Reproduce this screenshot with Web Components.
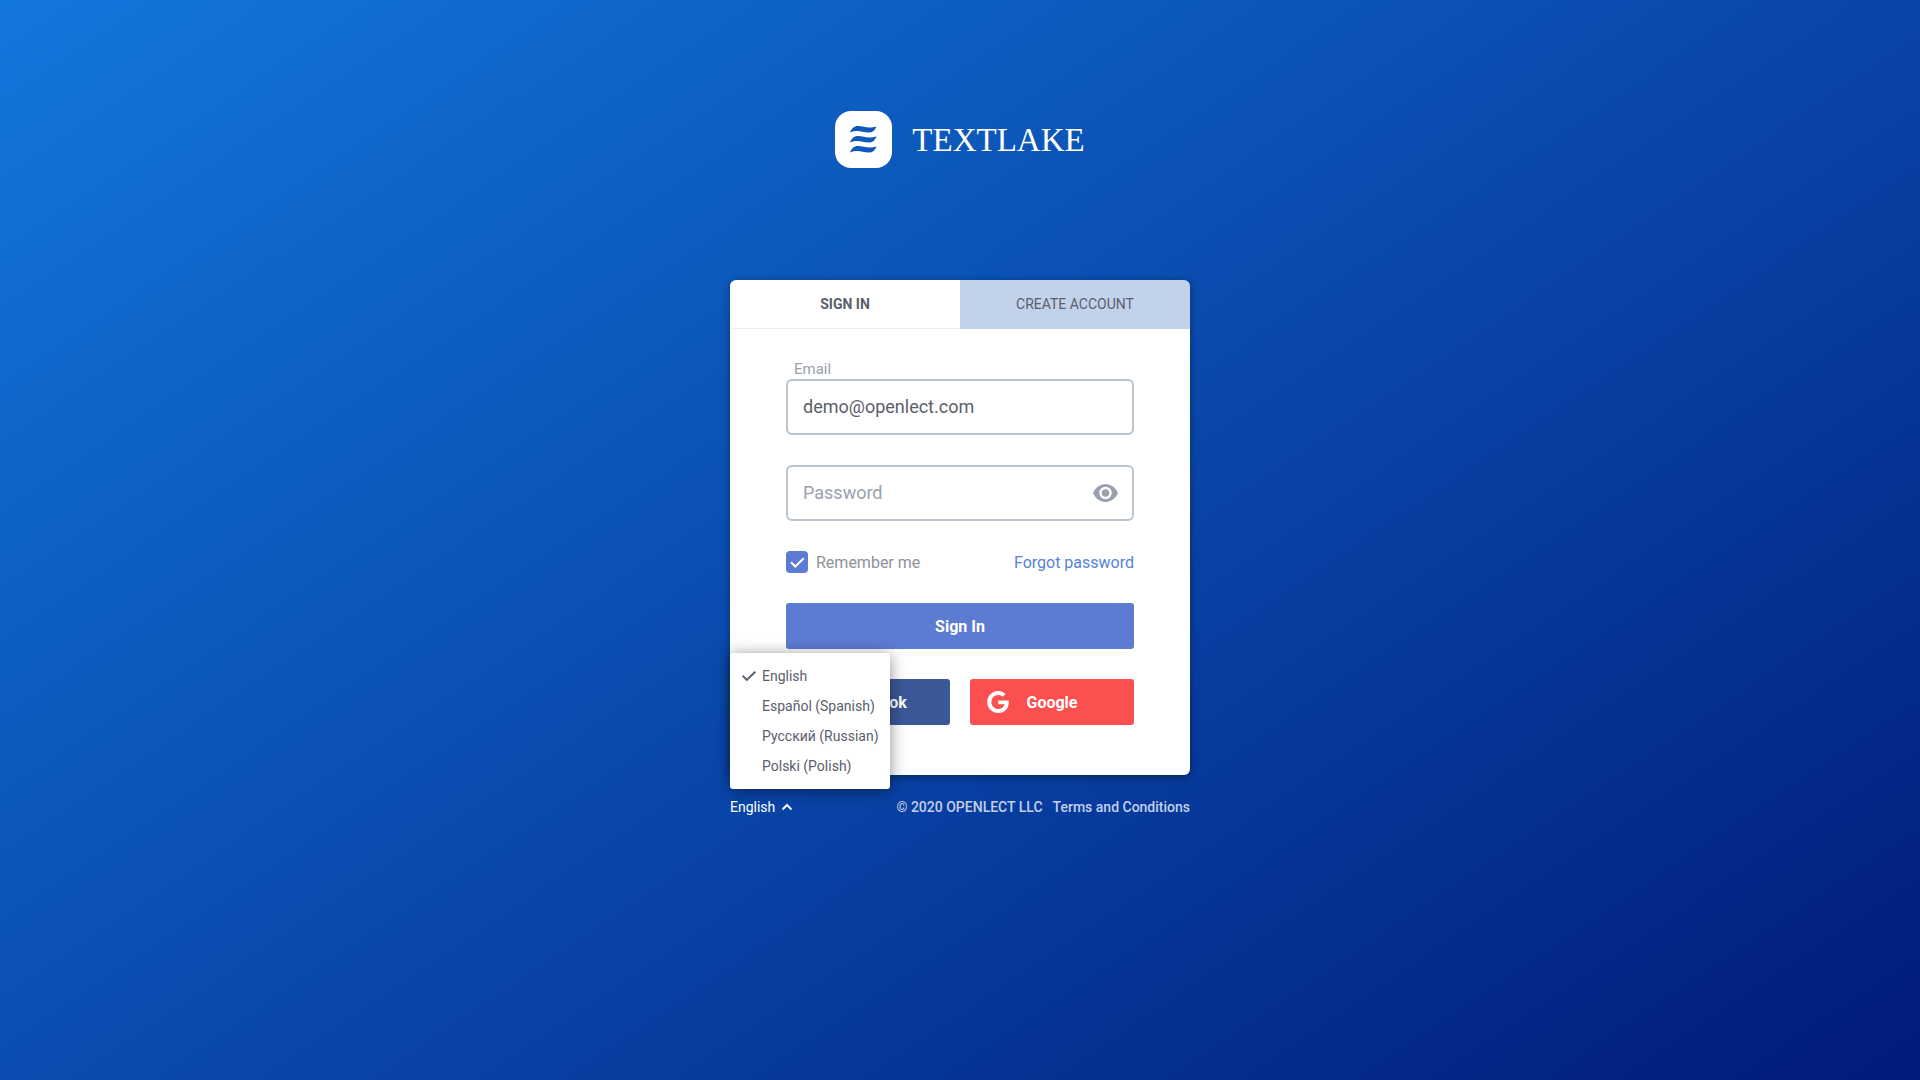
<!DOCTYPE html>
<html lang="en">
<head>
<meta charset="utf-8">
<title>Textlake – Sign In</title>
<style>
  html { height: 100%; }
  body { margin: 0; min-height: 100%; font-family: Roboto, "Noto Sans", sans-serif; font-size: 16px; line-height: 20px; color: #5a606b;
    background: linear-gradient(146deg, #1277db 0%, #0943a6 56%, #001a7a 100%) no-repeat; }
</style>
</head>
<body>
<tl-page>
  <tl-logo slot="logo">TEXTLAKE</tl-logo>
  <tl-auth-card>
    <tl-field label="Email" type="email" value="demo@openlect.com"></tl-field>
    <tl-field placeholder="Password" type="password"></tl-field>
    <tl-options></tl-options>
    <tl-button>Sign In</tl-button>
    <tl-social></tl-social>
  </tl-auth-card>
  <tl-footer slot="footer"></tl-footer>
</tl-page>
<script>
const define = (name, html, setup) => customElements.define(name, class extends HTMLElement {
  constructor() {
    super();
    const t = document.createElement('template');
    t.innerHTML = '<style>*{box-sizing:border-box}button,input{font:inherit;margin:0}a{color:inherit;text-decoration:none}svg{display:block;fill:currentColor}</style>' + html;
    this.attachShadow({ mode: 'open' }).append(t.content.cloneNode(true));
    if (setup) setup(this, this.shadowRoot);
  }
});

define('tl-page', `
<style>
  :host { display: block; min-height: 100vh; }
  header { display: flex; justify-content: center; padding: 111px 0 112px; }
  main { max-width: 460px; margin: 0 auto; }
</style>
<header><slot name="logo"></slot></header>
<main><slot></slot><slot name="footer"></slot></main>`);

define('tl-logo', `
<style>
  :host { display: flex; align-items: center; gap: 20px; color: #fff; font: 33px/40px "Liberation Serif", serif; }
  svg { width: 57px; height: 57px; }
  .wave { fill: #0e58bb; }
</style>
<svg viewBox="0 0 57 57" aria-hidden="true">
  <rect width="57" height="57" rx="16"/>
  <g class="wave">
    <path d="M15 21.5C16.5 17.5 19 15 23 15C29 15 33 18.500 41.500 15.200C40 19.500 37.500 21.500 33.500 21.500C27 21.500 23 18 15 21.500Z"/>
    <path d="M15 31.500C16.500 27.500 19 25 23 25C29 25 33 28.500 41.500 25.200C40 29.500 37.500 31.500 33.500 31.500C27 31.500 23 28 15 31.500Z"/>
    <path d="M15 41.500C16.500 37.500 19 35 23 35C29 35 33 38.500 41.500 35.200C40 39.500 37.500 41.500 33.500 41.500C27 41.500 23 38 15 41.500Z"/>
  </g>
</svg>
<span><slot></slot></span>`);

define('tl-auth-card', `
<style>
  :host { display: block; border-radius: 6px; box-shadow: 0 2px 8px rgba(0,0,0,.4); overflow: hidden; }
  nav { display: grid; grid-template-columns: 1fr 1fr; }
  button { height: 49px; border: 0; border-bottom: 1px solid #c3d2eb; padding: 0; font-size: 14px; color: #5a606b; background: #c3d2eb; }
  .on { background: #fff; font-weight: 700; border-color: #eceef0; }
  form { display: flex; flex-direction: column; gap: 30px; padding: 30px 56px 50px; background: #fff; }
</style>
<nav role="tablist"><button class="on" role="tab" aria-selected="true">SIGN IN</button><button role="tab" aria-selected="false">CREATE ACCOUNT</button></nav>
<form><slot></slot></form>`);

define('tl-field', `
<style>
  :host { display: block; }
  label { display: block; padding-left: 8px; height: 20px; color: #9aa1ae; font-size: 15px; }
  label[hidden] { display: none; }
  .box { display: flex; align-items: center; height: 56px; border: 2px solid #b9c3cd; border-radius: 6px; padding: 0 14px 0 15px; }
  input { flex: 1; min-width: 0; height: 100%; border: 0; outline: 0; padding: 0 0 2px; background: none; font-size: 18px; color: #5a606b; }
  input::placeholder { color: #9aa1ae; opacity: 1; }
  button { border: 0; padding: 0; background: none; color: #9aa1ae; }
</style>
<label for="i"></label>
<div class="box"><input id="i"><button type="button" aria-label="Show password"><svg width="25" height="18" viewBox="0 0 25 18"><path fill-rule="evenodd" d="M12.500 0C7 0 2.500 3.500 0 9C2.500 14.500 7 18 12.500 18S22.500 14.500 25 9C22.500 3.500 18 0 12.500 0ZM12.500 2.800A6.200 6.200 0 1 1 12.500 15.200A6.200 6.200 0 1 1 12.500 2.800ZM12.500 5.200A3.800 3.800 0 1 0 12.500 12.800A3.800 3.800 0 1 0 12.500 5.200Z"/></svg></button></div>`,
(host, root) => {
  const input = root.querySelector('input'), label = root.querySelector('label');
  const text = host.getAttribute('label');
  input.type = host.getAttribute('type');
  input.value = host.getAttribute('value') || '';
  if (text) label.textContent = text;
  else { label.hidden = true; input.placeholder = host.getAttribute('placeholder'); input.setAttribute('aria-label', input.placeholder); }
  if (input.type !== 'password') root.querySelector('button').remove();
});

define('tl-options', `
<style>
  :host { display: flex; justify-content: space-between; align-items: flex-end; height: 22px; }
  label { display: flex; align-items: flex-end; gap: 8px; color: #8e9298; }
  .tick { display: grid; }
  .tick > * { grid-area: 1 / 1; }
  input { appearance: none; width: 22px; height: 22px; border-radius: 4px; background: #c5ccd6; }
  input:checked { background: #5c7bd3; }
  svg { fill: none; stroke: #fff; stroke-width: 2; pointer-events: none; }
  a { color: #5683dd; }
</style>
<label><span class="tick"><input type="checkbox" checked><svg width="22" height="22" viewBox="0 0 22 22"><path d="M5 11.300L9.300 15.500L17.700 7.200"/></svg></span>Remember me</label>
<a href="#forgot">Forgot password</a>`);

define('tl-button', `
<style>
  :host { display: block; }
  button { display: block; width: 100%; height: 46px; border: 0; border-radius: 3px; padding: 2px 0 0; background: #5c7bd3; color: #fff; font-weight: 700; }
</style>
<button type="submit"><slot></slot></button>`);

define('tl-social', `
<style>
  :host { display: grid; grid-template-columns: 1fr 1fr; gap: 20px; }
  button { display: grid; grid-template-columns: 22px 1fr 22px; align-items: center; height: 46px; border: 0; border-radius: 3px; padding: 0 17px; color: #fff; font-weight: 700; text-align: center; }
  span { padding-top: 2px; }
  .fb { grid-template-columns: 30px 1fr 22px; background: #3b5998; }
  .gg { background: #fc4f4f; }
</style>
<button class="fb" type="button"><svg width="22" height="22" viewBox="0 0 22 22"><path d="M12.500 21V12H15.600L16.100 8.500H12.500V6.300C12.500 5.200 12.900 4.500 14.400 4.500H16.200V1.300C15.800 1.200 14.700 1.100 13.500 1.100C10.800 1.100 9 2.700 9 5.800V8.500H6V12H9V21Z"/></svg><span>Facebook</span></button>
<button class="gg" type="button"><svg width="22" height="22" viewBox="0 0 24 24"><path d="M12.240 10.285V14.400h6.806c-.275 1.765-2.056 5.174-6.806 5.174-4.095 0-7.439-3.389-7.439-7.574s3.345-7.574 7.439-7.574c2.330 0 3.891.989 4.785 1.849l3.254-3.138C18.189 1.186 15.479 0 12.240 0c-6.635 0-12 5.365-12 12s5.365 12 12 12c6.926 0 11.520-4.869 11.520-11.726 0-.788-.085-1.390-.189-1.989H12.240z"/></svg><span>Google</span></button>`);

define('tl-footer', `
<style>
  :host { display: flex; justify-content: space-between; align-items: center; height: 24px; margin-top: 20px; font-size: 14px; color: #fff; }
  .links { display: flex; gap: 10px; color: #c4d0e8; font-weight: 500; }
</style>
<tl-language></tl-language>
<div class="links"><span>© 2020 OPENLECT LLC</span><a href="#terms">Terms and Conditions</a></div>`);

define('tl-language', `
<style>
  :host { display: block; position: relative; }
  .open { display: flex; align-items: center; gap: 6px; height: 24px; border: 0; padding: 0; background: none; color: #fff; }
  .open svg { fill: none; stroke: #fff; stroke-width: 2; }
  .menu { position: absolute; z-index: 2; left: 0; bottom: calc(100% + 6px); width: 160px; padding: 8px 0; border-radius: 3px; background: #fff; box-shadow: 0 2px 16px rgba(0,0,0,.45); }
  .menu button { display: grid; grid-template-columns: 14px 1fr; gap: 6px; align-items: center; width: 100%; height: 30px; border: 0; padding: 0 0 0 12px; background: none; color: #5a606b; text-align: left; white-space: nowrap; }
  .menu span { grid-column: 2; }
  .menu svg { fill: none; stroke: currentColor; stroke-width: 2; }
</style>
<div class="menu" role="menu">
  <button role="menuitemradio" aria-checked="true"><svg width="14" height="10" viewBox="0 0 14 10"><path d="M.7 4.800L4.800 8.900L13.300.7"/></svg><span>English</span></button>
  <button role="menuitemradio" aria-checked="false"><span>Español (Spanish)</span></button>
  <button role="menuitemradio" aria-checked="false"><span>Русский (Russian)</span></button>
  <button role="menuitemradio" aria-checked="false"><span>Polski (Polish)</span></button>
</div>
<button class="open" aria-haspopup="menu" aria-expanded="true">English<svg width="12" height="8" viewBox="0 0 12 8"><path d="M1.500 6.500L6 2L10.500 6.500"/></svg></button>`);
</script>
</body>
</html>
